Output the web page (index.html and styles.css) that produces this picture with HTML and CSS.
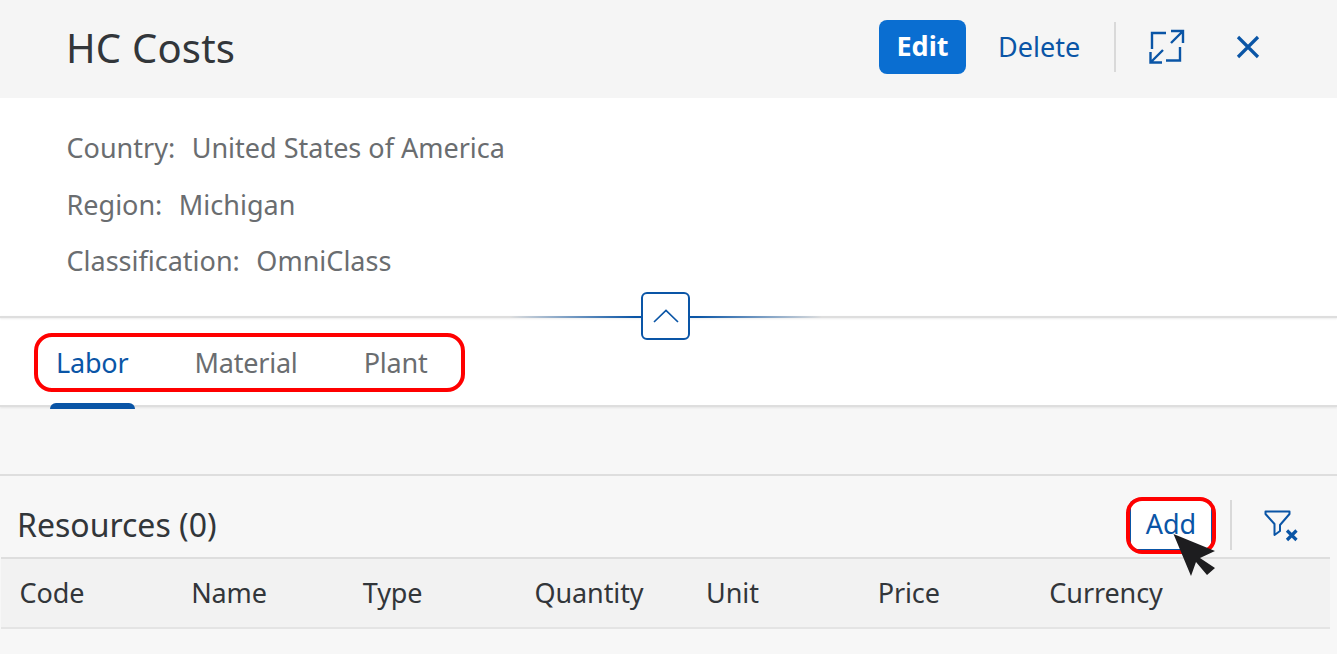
FILE: index.html
```html
<!DOCTYPE html>
<html lang="en">
<head>
<meta charset="utf-8">
<title>HC Costs</title>
<link rel="stylesheet" href="styles.css">
</head>
<body>
<div class="page">
  <header class="title-bar">
    <h1 class="title">HC Costs</h1>
    <div class="title-actions">
      <button class="btn btn-primary">Edit</button>
      <button class="btn btn-ghost btn-delete">Delete</button>
      <span class="sep"></span>
      <svg class="icon-expand" width="36" height="38" viewBox="0 0 36 38" fill="none" stroke="#0a55a6" stroke-width="2.4">
        <path d="M3 21V5H17"/>
        <path d="M22 3H34V15M34 3L22 15"/>
        <path d="M31 19V32.500H17"/>
        <path d="M1.500 24V34.500H13M1.500 34.500L14 22"/>
      </svg>
      <svg class="icon-close" width="26" height="26" viewBox="0 0 26 26" fill="none" stroke="#0a55a6" stroke-width="3.2">
        <path d="M3 3L23 23M23 3L3 23"/>
      </svg>
    </div>
  </header>

  <section class="attrs">
    <p class="attr"><span>Country:</span><span>United States of America</span></p>
    <p class="attr"><span>Region:</span><span>Michigan</span></p>
    <p class="attr"><span>Classification:</span><span>OmniClass</span></p>
  </section>

  <nav class="tabs">
    <a class="tab tab-active">Labor</a>
    <a class="tab">Material</a>
    <a class="tab">Plant</a>
    <span class="mark mark-tabs"></span>
  </nav>

  <div class="divider">
    <span class="divider-line"></span>
    <button class="collapse" aria-label="Collapse">
      <svg width="26" height="14" viewBox="0 0 26 14" fill="none" stroke="#0a55a6" stroke-width="1.700">
        <path d="M1 13L13 1.500L25 13"/>
      </svg>
    </button>
  </div>

  <div class="band"></div>

  <section class="resources">
    <div class="toolbar">
      <h2 class="res-title">Resources (0)</h2>
      <div class="toolbar-actions">
        <button class="btn btn-add">Add</button>
        <span class="sep sep-small"></span>
        <svg class="icon-filter" width="36" height="36" viewBox="0 0 36 36" fill="none" stroke="#0a55a6">
          <path stroke-width="2" d="M2.500 4.500H26.500V7L17 18V24L11.500 28V17L2.500 7Z" stroke-linejoin="round"/>
          <path stroke-width="3.200" d="M24 23.500L33.500 33M33.500 23.500L24 33"/>
        </svg>
        <span class="mark mark-add"></span>
      </div>
    </div>
    <div class="table-head">
      <span>Code</span><span>Name</span><span>Type</span><span>Quantity</span><span>Unit</span><span>Price</span><span>Currency</span>
    </div>
  </section>

  <svg class="cursor" width="44" height="44" viewBox="0 0 44 44">
    <path fill="#1d1d1f" d="M0.500 1L42 18L27 25L42 35L34 42L23 29L18 43Z"/>
  </svg>
</div>
</body>
</html>
```
FILE: styles.css
```css
* { box-sizing: border-box; }
html, body { margin: 0; padding: 0; }
body {
  width: 1337px;
  height: 654px;
  overflow: hidden;
  background: #f7f7f7;
  font-family: "Noto Sans", "Open Sans", sans-serif;
  color: #32363a;
}
.page { position: relative; width: 1337px; height: 654px; }

.title-bar {
  height: 98px;
  background: #f5f5f5;
  display: flex;
  align-items: center;
  justify-content: space-between;
  padding: 0 76px 0 66px;
}
.title { margin: -2px 0 0; font-size: 40px; font-weight: 400; line-height: 48px; color: #32363a; letter-spacing: 0.2px; }
.title-actions { display: flex; align-items: center; height: 54px; margin-top: -4px; }

.btn {
  font-family: inherit;
  font-size: 27px;
  border: 0;
  background: transparent;
  padding: 0;
  color: #0a55a6;
  cursor: pointer;
}
.btn-primary {
  width: 87px;
  height: 54px;
  border-radius: 8px;
  background: #0a6ed1;
  color: #fff;
  font-weight: 700;
  line-height: 50px;
  padding-bottom: 2px;
}
.btn-delete { margin-left: 32px; width: 82px; padding-bottom: 2px; }
.sep { width: 2px; height: 50px; background: #d9d9d9; margin-left: 34px; }
.icon-expand { margin-left: 33px; margin-top: 0; }
.icon-close { margin-left: 50px; }

.attrs { height: 218px; background: #fff; padding: 26px 66.500px 0; }
.attr {
  margin: 0 0 16.500px;
  height: 40px;
  line-height: 48px;
  font-size: 27px;
  color: #6a6d70;
  display: flex;
  gap: 16.500px;
}

.divider {
  position: absolute;
  left: 0;
  right: 0;
  top: 316px;
  height: 2px;
  background: #dedede;
  box-shadow: 0 1px 2px rgba(0,0,0,.08);
}
.divider-line {
  position: absolute;
  left: 510px;
  width: 312px;
  top: 0;
  height: 2px;
  background: linear-gradient(90deg, rgba(10,85,166,0), #0a55a6 40%, #0a55a6 60%, rgba(10,85,166,0));
}
.collapse {
  position: absolute;
  left: 641px;
  top: -24px;
  width: 49px;
  height: 48px;
  border: 2px solid #0a55a6;
  border-radius: 6px;
  background: #fff;
  padding: 0;
  display: flex;
  align-items: center;
  justify-content: center;
}

.tabs {
  position: relative;
  height: 91px;
  background: #fff;
  border-bottom: 2px solid #dedede;
  display: flex;
  gap: 66px;
  padding: 22px 0 0 56px;
  box-shadow: 0 1px 2px rgba(0,0,0,.08);
}
.tab { font-size: 27px; line-height: 50px; color: #6a6d70; letter-spacing: -0.2px; }
.tab-active { color: #0a55a6; position: relative; }
.tab-active::after {
  content: "";
  position: absolute;
  left: -6px;
  right: -7px;
  top: 65px;
  height: 6px;
  background: #0a55a6;
  border-radius: 6px 6px 0 0;
}
.mark { position: absolute; border: 4px solid #f00; background: transparent; }
.mark-tabs { left: 34px; top: 17px; width: 431px; height: 59px; border-radius: 18px; }

.band { height: 69px; background: #f7f7f7; border-bottom: 2px solid #dedede; }

.resources { background: #f7f7f7; }
.toolbar {
  height: 81px;
  display: flex;
  align-items: center;
  justify-content: space-between;
  padding: 16px 38px 0 17px;
}
.res-title { margin: 0; font-size: 32px; font-weight: 400; color: #32363a; }
.toolbar-actions { position: relative; display: flex; align-items: center; height: 52px; }
.btn-add {
  width: 84px;
  height: 52px;
  background: #fff;
  border-radius: 8px;
  box-shadow: inset 0 0 0 2px #0a55a6;
  line-height: 48px;
  padding-bottom: 2px;
}
.sep-small { height: 50px; margin-left: 17px; }
.icon-filter { margin-left: 31px; margin-top: 0; }
.mark-add { left: -3px; top: -2px; width: 90px; height: 57px; border-radius: 16px; }

.table-head {
  margin: 0 7px 0 1px;
  height: 72px;
  background: #f2f2f2;
  border-top: 2px solid #dedede;
  border-bottom: 2px solid #e4e4e4;
  display: grid;
  grid-template-columns: repeat(7, 171.650px);
  align-items: center;
  padding: 0 0 2px 18.500px;
  font-size: 27px;
  letter-spacing: -0.1px;
  color: #32363a;
}

.cursor { position: absolute; left: 1173px; top: 533px; }
```
